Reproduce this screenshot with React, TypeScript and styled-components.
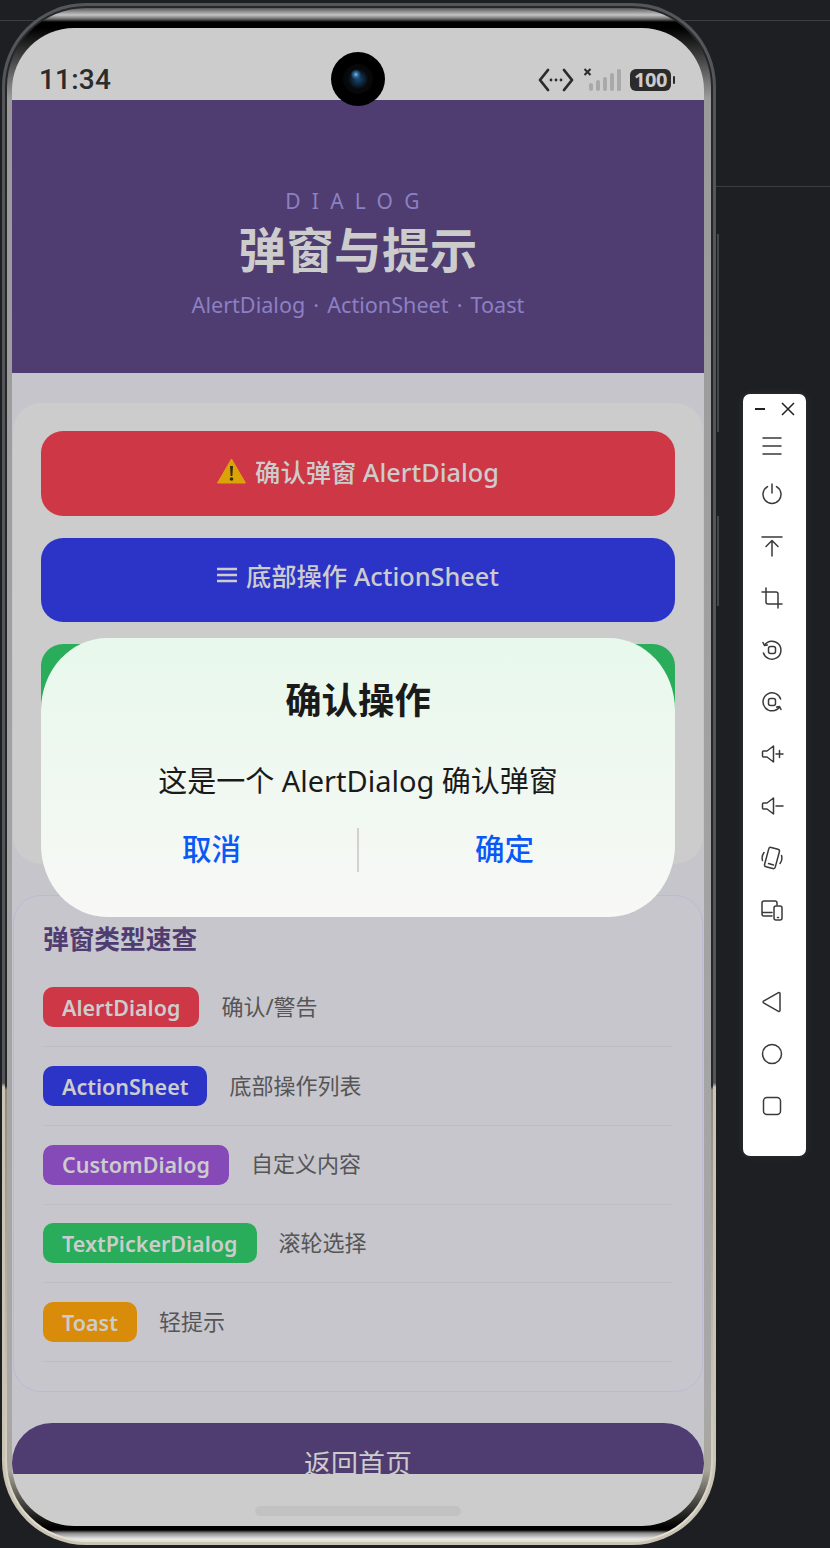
import React from 'react';
import styled, { createGlobalStyle } from 'styled-components';

const GlobalStyle = createGlobalStyle`
  html, body {
    margin: 0;
    padding: 0;
    background: #1e1f23;
    overflow: hidden;
  }
  * { box-sizing: border-box; }
`;

const FONT = `"Noto Sans", "Noto Sans CJK SC", sans-serif`;

const BADGES = [
  { name: 'AlertDialog', desc: '确认/警告', color: '#cd3746' },
  { name: 'ActionSheet', desc: '底部操作列表', color: '#2c34c8' },
  { name: 'CustomDialog', desc: '自定义内容', color: '#8649b8' },
  { name: 'TextPickerDialog', desc: '滚轮选择', color: '#29ad5b' },
  { name: 'Toast', desc: '轻提示', color: '#d98c0a' },
];

// Side toolbar glyphs, all on a 24 box
const Tool: React.FC<{ children: React.ReactNode; height?: number }> = ({ children, height = 52 }) => (
  <ToolRow $height={height}>
    <svg width="24" height="24" viewBox="0 0 24 24" fill="none" stroke="#3a3a3a" strokeWidth="1.5" strokeLinecap="round" strokeLinejoin="round">
      {children}
    </svg>
  </ToolRow>
);

const Speaker = () => <path d="M3.5 9h3.5l6.5-5v16L7 15H3.5a1 1 0 0 1-1-1v-4a1 1 0 0 1 1-1z" />;

const Toolbar: React.FC = () => (
  <ToolPanel>
    <ToolHead>
      <svg width="12" height="12" viewBox="0 0 12 12" stroke="#222" strokeWidth="2"><path d="M1 6h10" /></svg>
      <svg width="14" height="14" viewBox="0 0 14 14" stroke="#222" strokeWidth="1.5"><path d="M1 1l12 12M13 1L1 13" /></svg>
    </ToolHead>
    <Tool height={44}><path d="M3 4h18M3 12h18M3 20h18" /></Tool>
    <Tool><path d="M12 2v9M7.5 4.6a9 9 0 1 0 9 0" /></Tool>
    <Tool><path d="M2 3h20M12 22V7M6 12.5L12 6.5l6 6" /></Tool>
    <Tool><path d="M6 2v14a2 2 0 0 0 2 2h14M18 22V8a2 2 0 0 0-2-2H2" /></Tool>
    <Tool>
      <path d="M3.4 15A9 9 0 1 0 4.6 7M3 4.5l1.4 3 3-.6" />
      <rect x="8.5" y="8.5" width="7" height="7" rx="2" />
    </Tool>
    <Tool>
      <path d="M20.6 9A9 9 0 1 0 19.4 17M21 19.5l-1.4-3-3 .6" />
      <rect x="8.5" y="8.5" width="7" height="7" rx="2" />
    </Tool>
    <Tool><Speaker /><path d="M16 12h7M19.5 8.5v7" /></Tool>
    <Tool><Speaker /><path d="M16 12h7" /></Tool>
    <Tool>
      <rect x="6.5" y="2" width="11" height="20" rx="2" transform="rotate(15 12 12)" />
      <path d="M8.5 17.6l5 1.3M4 6.5a9 9 0 0 0-1.5 8M20 17.5a9 9 0 0 0 1.5-8" />
    </Tool>
    <Tool>
      <path d="M12 18H4a2 2 0 0 1-2-2V5a2 2 0 0 1 2-2h11a2 2 0 0 1 2 2v2M2 14.5h10" />
      <rect x="14" y="8" width="8" height="14" rx="2" />
      <path d="M17.5 19.5h1" />
    </Tool>
    <ToolGap />
    <Tool><path d="M20 3.5v17a1 1 0 0 1-1.5.8L3.5 12.8a1 1 0 0 1 0-1.6L18.5 2.7a1 1 0 0 1 1.5.8z" /></Tool>
    <Tool><circle cx="12" cy="12" r="9.5" /></Tool>
    <Tool><rect x="3.5" y="3.5" width="17" height="17" rx="3.5" /></Tool>
  </ToolPanel>
);

const StatusIcons: React.FC = () => (
  <StatusRight>
    <svg width="36" height="24" viewBox="0 0 36 24" fill="none" stroke="#2b2b2b" strokeWidth="2.8" strokeLinecap="round" strokeLinejoin="round">
      <path d="M10 2L2 12l8 10M26 2l8 10-8 10" />
      <path d="M13 12h.01M18 12h.01M23 12h.01" />
    </svg>
    <svg width="38" height="24" viewBox="0 0 38 24">
      <path d="M1.5 1l6 6M7.5 1l-6 6" stroke="#2b2b2b" strokeWidth="2" fill="none" />
      <g fill="#a9a9a9">
        <rect x="6" y="15" width="4" height="8" rx="2" />
        <rect x="13" y="12" width="4" height="11" rx="2" />
        <rect x="20" y="9" width="4" height="14" rx="2" />
        <rect x="27" y="5" width="4" height="18" rx="2" />
        <rect x="34" y="1" width="4" height="22" rx="1.5" />
      </g>
    </svg>
    <Battery>
      <BatteryBody>100</BatteryBody>
      <BatteryNub />
    </Battery>
  </StatusRight>
);

const WarningIcon: React.FC = () => (
  <svg width="29" height="26" viewBox="0 0 29 26">
    <path d="M14.5 1L28.5 25H.5z" fill="#dba406" stroke="#dba406" strokeLinejoin="round" />
    <path d="M13 8h3l-.6 10h-1.8z" fill="#3a2a10" />
    <circle cx="14.5" cy="21" r="1.8" fill="#3a2a10" />
  </svg>
);

const MenuGlyph: React.FC = () => (
  <svg width="20" height="16" viewBox="0 0 20 16" stroke="#cccccc" strokeWidth="2.6"><path d="M0 2h20M0 8h20M0 14h20" /></svg>
);

const App: React.FC = () => (
  <Page>
    <GlobalStyle />
    <SideKey $top={234} $height={198} />
    <SideKey $top={516} $height={90} />
    <Shell>
      <Rim>
        <Bezel>
          <Screen>
            <StatusBar>
              <Time>11:34</Time>
              <Camera><Lens /></Camera>
              <StatusIcons />
            </StatusBar>
            <Content>
              <Hero>
                <Eyebrow>DIALOG</Eyebrow>
                <HeroTitle>弹窗与提示</HeroTitle>
                <HeroSub>AlertDialog · ActionSheet · Toast</HeroSub>
              </Hero>
              <ActionCard>
                <ActionButton $color="#cd3746" $lift={4}><WarningIcon /> 确认弹窗 AlertDialog</ActionButton>
                <ActionButton $color="#2c34c8" $lift={10}><MenuGlyph /> 底部操作 ActionSheet</ActionButton>
                <ActionButton $color="#29ad5b" />
                <ActionButton $color="#8649b8" />
              </ActionCard>
              <RefCard>
                <RefTitle>弹窗类型速查</RefTitle>
                {BADGES.map((b) => (
                  <RefRow key={b.name}>
                    <Badge $color={b.color}>{b.name}</Badge>
                    <RefDesc>{b.desc}</RefDesc>
                  </RefRow>
                ))}
              </RefCard>
              <BackButton>返回首页</BackButton>
            </Content>
            <BottomBar><HomeBar /></BottomBar>
            <Dialog>
              <DialogTitle>确认操作</DialogTitle>
              <DialogText>这是一个 AlertDialog 确认弹窗</DialogText>
              <DialogActions>
                <DialogAction>取消</DialogAction>
                <DialogDivider />
                <DialogAction>确定</DialogAction>
              </DialogActions>
            </Dialog>
          </Screen>
        </Bezel>
      </Rim>
    </Shell>
    <Toolbar />
  </Page>
);

export default App;

const Page = styled.div`
  position: relative;
  width: 830px;
  height: 1548px;
  display: flex;
  align-items: flex-start;
  padding: 3px 0 0 2px;
  background-color: #1e1f23;
  background-image:
    linear-gradient(#3c3d40, #3c3d40),
    linear-gradient(#3c3d40, #3c3d40);
  background-size: 100% 1px, 120px 1px;
  background-position: 0 20px, 710px 186px;
  background-repeat: no-repeat;
  font-family: ${FONT};
  overflow: hidden;
`;

const SideKey = styled.div<{ $top: number; $height: number }>`
  position: absolute;
  left: 717px;
  top: ${(p) => p.$top}px;
  width: 2px;
  height: ${(p) => p.$height}px;
  background: #45464a;
`;

const Shell = styled.div`
  width: 714px;
  height: 1542px;
  flex-shrink: 0;
  padding: 3px;
  border-radius: 84px;
  background: linear-gradient(to bottom, #55565a 0, #55565a 1080px, #c9c4b4 1084px, #c9c4b4 100%);
`;

const Rim = styled.div`
  height: 100%;
  padding: 2px;
  border-radius: 81px;
  background: linear-gradient(to bottom, #26272a 0, #26272a 1080px, #8f8b80 1084px, #e4e0d4 100%);
`;

const Bezel = styled.div`
  height: 100%;
  padding: 20px 5px 13px;
  border-radius: 79px;
  background: linear-gradient(
    to bottom,
    #5a5a5a 0,
    #c4c4c4 7px,
    #6a6a6a 11px,
    #000 14px,
    #000 20px,
    #9a9a9a 90px,
    #a8a8a8 1400px,
    #a8a59a calc(100% - 70px),
    #000 calc(100% - 13px),
    #000 calc(100% - 10px),
    #888 calc(100% - 7px),
    #e8e8e8 calc(100% - 1px)
  );
`;

const Screen = styled.div`
  position: relative;
  width: 692px;
  height: 1498px;
  display: flex;
  flex-direction: column;
  border-radius: 62px;
  background: #cccccc;
  overflow: hidden;
`;

const StatusBar = styled.div`
  position: relative;
  flex: 0 0 72px;
  min-height: 0;
  display: flex;
  align-items: center;
  justify-content: space-between;
  padding: 37px 29px 5px 27px;
`;

const Time = styled.div`
  font-family: Roboto, sans-serif;
  font-size: 28px;
  font-weight: 500;
  line-height: 26px;
  color: #2b2b2b;
  letter-spacing: 0.2px;
`;

const Camera = styled.div`
  position: absolute;
  left: 319px;
  top: 24px;
  width: 54px;
  height: 54px;
  border-radius: 50%;
  background: #000;
  display: flex;
  align-items: center;
  justify-content: center;
  z-index: 2;
`;

const Lens = styled.div`
  width: 30px;
  height: 30px;
  border-radius: 50%;
  background:
    radial-gradient(circle at 43% 35%, #7fc0e8 0, #2d6a9a 9%, transparent 20%),
    radial-gradient(circle at 50% 50%, #1c4a72 0, #0f2a44 24%, #08090c 48%, #050505 100%);
`;

const StatusRight = styled.div`
  display: flex;
  align-items: center;
  gap: 9px;
`;

const Battery = styled.div`
  display: flex;
  align-items: center;
  gap: 2px;
`;

const BatteryBody = styled.div`
  width: 41px;
  height: 22px;
  border-radius: 6px;
  background: #2b2b2b;
  color: #cccccc;
  font-family: "Noto Sans", sans-serif;
  font-size: 20px;
  font-weight: 700;
  line-height: 22px;
  text-align: center;
  letter-spacing: -0.5px;
`;

const BatteryNub = styled.div`
  width: 2px;
  height: 8px;
  border-radius: 1px;
  background: #2b2b2b;
`;

const Content = styled.div`
  flex: 1;
  min-height: 0;
  overflow: hidden;
  background: #c6c5cb;
`;

const Hero = styled.div`
  height: 273px;
  display: flex;
  flex-direction: column;
  align-items: center;
  padding-top: 87px;
  background: #4f3c70;
`;

const Eyebrow = styled.div`
  font-size: 21px;
  line-height: 28px;
  letter-spacing: 11.2px;
  margin-bottom: 5px;
  color: #8c80c4;
`;

const HeroTitle = styled.div`
  font-size: 47.5px;
  font-weight: 700;
  line-height: 60px;
  letter-spacing: 0.4px;
  color: #cccccc;
`;

const HeroSub = styled.div`
  margin-top: 10px;
  font-size: 21.6px;
  line-height: 30px;
  word-spacing: 2.5px;
  color: #8c80c4;
`;

const ActionCard = styled.div`
  margin: 30px 1px 0;
  padding: 28px;
  display: flex;
  flex-direction: column;
  gap: 22px;
  border-radius: 28px;
  background: #cccccc;
`;

const ActionButton = styled.div<{ $color: string; $lift?: number }>`
  height: 84.67px;
  display: flex;
  align-items: center;
  justify-content: center;
  gap: 9px;
  padding-bottom: ${(p) => p.$lift ?? 0}px;
  border-radius: 22px;
  background: ${(p) => p.$color};
  color: #cccccc;
  font-size: 25.3px;
  font-weight: 500;
`;

const RefCard = styled.div`
  margin: 31px 1px 0;
  padding: 26px 29px 29px;
  border: 1px solid #bcbad2;
  border-radius: 28px;
  background: #c7c6cd;
`;

const RefTitle = styled.div`
  font-size: 25.7px;
  font-weight: 700;
  line-height: 36px;
  margin-bottom: 11px;
  color: #4f3c70;
`;

const RefRow = styled.div`
  height: 78.67px;
  display: flex;
  align-items: center;
  gap: 22px;
  border-bottom: 1px solid #bebdc3;
`;

const Badge = styled.div<{ $color: string }>`
  height: 40px;
  padding: 0 19px;
  display: flex;
  align-items: center;
  border-radius: 10px;
  background: ${(p) => p.$color};
  color: #cccccc;
  font-size: 21.5px;
  font-weight: 600;
`;

const RefDesc = styled.div`
  padding-bottom: 5px;
  font-size: 22px;
  color: #555555;
`;

const BackButton = styled.div`
  margin-top: 31px;
  height: 80px;
  display: flex;
  align-items: center;
  justify-content: center;
  border-radius: 42px;
  background: #4f3c70;
  color: #cccccc;
  font-size: 27px;
`;

const BottomBar = styled.div`
  flex: 0 0 52px;
  display: flex;
  justify-content: center;
  padding-top: 32px;
`;

const HomeBar = styled.div`
  width: 206px;
  height: 10px;
  border-radius: 5px;
  background: #c2c2c2;
`;

const Dialog = styled.div`
  position: absolute;
  left: 29px;
  top: 610px;
  width: 634px;
  height: 279px;
  display: flex;
  flex-direction: column;
  align-items: center;
  padding-top: 36px;
  border-radius: 66px / 72px;
  background: linear-gradient(to bottom, #e8f8ec, #f8f8f6);
`;

const DialogTitle = styled.div`
  font-size: 36.4px;
  font-weight: 700;
  line-height: 52px;
  color: #1a1a1a;
`;

const DialogText = styled.div`
  margin-top: 35px;
  font-size: 29px;
  line-height: 40px;
  color: #1a1a1a;
`;

const DialogActions = styled.div`
  margin-top: 27px;
  width: 100%;
  display: flex;
  align-items: center;
  justify-content: space-between;
  padding: 0 25px 0 25px;
`;

const DialogAction = styled.div`
  width: 291px;
  padding-bottom: 2px;
  text-align: center;
  font-size: 29.5px;
  font-weight: 500;
  line-height: 42px;
  color: #0a59f7;
`;

const DialogDivider = styled.div`
  width: 2px;
  height: 44px;
  background: #d2d2d0;
`;

const ToolPanel = styled.div`
  width: 63px;
  height: 762px;
  margin: 391px 0 0 27px;
  flex-shrink: 0;
  border-radius: 7px;
  background: #ffffff;
  box-shadow: 0 0 8px rgba(255, 255, 255, 0.08);
`;

const ToolHead = styled.div`
  height: 30px;
  display: flex;
  align-items: center;
  justify-content: space-between;
  padding: 0 11px 0 11px;
`;

const ToolRow = styled.div<{ $height: number }>`
  height: ${(p) => p.$height}px;
  display: flex;
  align-items: center;
  justify-content: center;
  padding-right: 5px;
`;

const ToolGap = styled.div`
  height: 40px;
`;
